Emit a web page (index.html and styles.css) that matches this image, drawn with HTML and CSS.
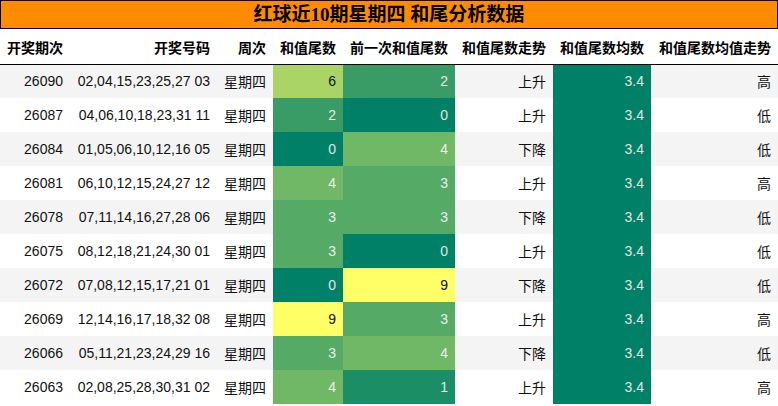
FILE: index.html
```html
<!DOCTYPE html>
<html lang="zh">
<head>
<meta charset="utf-8">
<title>红球近10期星期四 和尾分析数据</title>
<link rel="stylesheet" href="styles.css">
</head>
<body>
<div class="sheet">
  <div class="title">红球近10期星期四 和尾分析数据</div>
  <table class="grid">
    <colgroup>
      <col class="c1"><col class="c2"><col class="c3"><col class="c4"><col class="c5"><col class="c6"><col class="c7"><col class="c8">
    </colgroup>
    <thead>
      <tr>
        <th>开奖期次</th><th>开奖号码</th><th>周次</th><th>和值尾数</th><th>前一次和值尾数</th><th>和值尾数走势</th><th>和值尾数均数</th><th>和值尾数均值走势</th>
      </tr>
    </thead>
    <tbody>
      <tr><td>26090</td><td>02,04,15,23,25,27 03</td><td>星期四</td><td class="h6">6</td><td class="h2">2</td><td>上升</td><td class="h0">3.4</td><td>高</td></tr>
      <tr><td>26087</td><td>04,06,10,18,23,31 11</td><td>星期四</td><td class="h2">2</td><td class="h0">0</td><td>上升</td><td class="h0">3.4</td><td>低</td></tr>
      <tr><td>26084</td><td>01,05,06,10,12,16 05</td><td>星期四</td><td class="h0">0</td><td class="h4">4</td><td>下降</td><td class="h0">3.4</td><td>低</td></tr>
      <tr><td>26081</td><td>06,10,12,15,24,27 12</td><td>星期四</td><td class="h4">4</td><td class="h3">3</td><td>上升</td><td class="h0">3.4</td><td>高</td></tr>
      <tr><td>26078</td><td>07,11,14,16,27,28 06</td><td>星期四</td><td class="h3">3</td><td class="h3">3</td><td>下降</td><td class="h0">3.4</td><td>低</td></tr>
      <tr><td>26075</td><td>08,12,18,21,24,30 01</td><td>星期四</td><td class="h3">3</td><td class="h0">0</td><td>上升</td><td class="h0">3.4</td><td>低</td></tr>
      <tr><td>26072</td><td>07,08,12,15,17,21 01</td><td>星期四</td><td class="h0">0</td><td class="h9">9</td><td>下降</td><td class="h0">3.4</td><td>低</td></tr>
      <tr><td>26069</td><td>12,14,16,17,18,32 08</td><td>星期四</td><td class="h9">9</td><td class="h3">3</td><td>上升</td><td class="h0">3.4</td><td>高</td></tr>
      <tr><td>26066</td><td>05,11,21,23,24,29 16</td><td>星期四</td><td class="h3">3</td><td class="h4">4</td><td>下降</td><td class="h0">3.4</td><td>低</td></tr>
      <tr><td>26063</td><td>02,08,25,28,30,31 02</td><td>星期四</td><td class="h4">4</td><td class="h1">1</td><td>上升</td><td class="h0">3.4</td><td>高</td></tr>
    </tbody>
  </table>
</div>
</body>
</html>
```

FILE: styles.css
```css
html, body {
  margin: 0;
  padding: 0;
  background: #ffffff;
}

body {
  font-family: "Liberation Sans", "Noto Sans CJK SC", sans-serif;
  font-size: 14px;
  color: #111111;
}

.sheet {
  width: 778px;
}

.title {
  box-sizing: border-box;
  height: 29px;
  border: 1px solid #000000;
  background: #ff8c00;
  color: #000000;
  font-family: "Liberation Serif", "Noto Sans CJK SC", serif;
  font-weight: bold;
  font-size: 19px;
  line-height: 27px;
  text-align: center;
}

.grid {
  width: 778px;
  table-layout: fixed;
  border-collapse: collapse;
  border-spacing: 0;
}

.c1 { width: 70px; }
.c2 { width: 147px; }
.c3 { width: 56px; }
.c4 { width: 70px; }
.c5 { width: 112px; }
.c6 { width: 98px; }
.c7 { width: 98px; }
.c8 { width: 127px; }

.grid th {
  height: 35px;
  padding: 2px 7px 0 7px;
  box-sizing: border-box;
  text-align: right;
  font-weight: bold;
  font-size: 14px;
  color: #000000;
  white-space: nowrap;
  border-bottom: 1px solid #000000;
  font-family: "Noto Sans CJK SC", sans-serif;
}

.grid td {
  height: 34px;
  padding: 0 7px;
  box-sizing: border-box;
  text-align: right;
  white-space: nowrap;
  color: #111111;
}

.grid tbody tr:nth-child(odd) td {
  background: #f4f4f4;
}

.grid tbody tr:nth-child(even) td {
  background: #ffffff;
}

.grid tbody tr td.h0 { background: #008066; color: #e4e4e4; }
.grid tbody tr td.h1 { background: #1c8e66; color: #e8e8e8; }
.grid tbody tr td.h2 { background: #399c66; color: #e8e8e8; }
.grid tbody tr td.h3 { background: #55aa66; color: #eeeeee; }
.grid tbody tr td.h4 { background: #71b866; color: #eeeeee; }
.grid tbody tr td.h6 { background: #aad466; color: #111111; }
.grid tbody tr td.h9 { background: #ffff66; color: #111111; }
```
